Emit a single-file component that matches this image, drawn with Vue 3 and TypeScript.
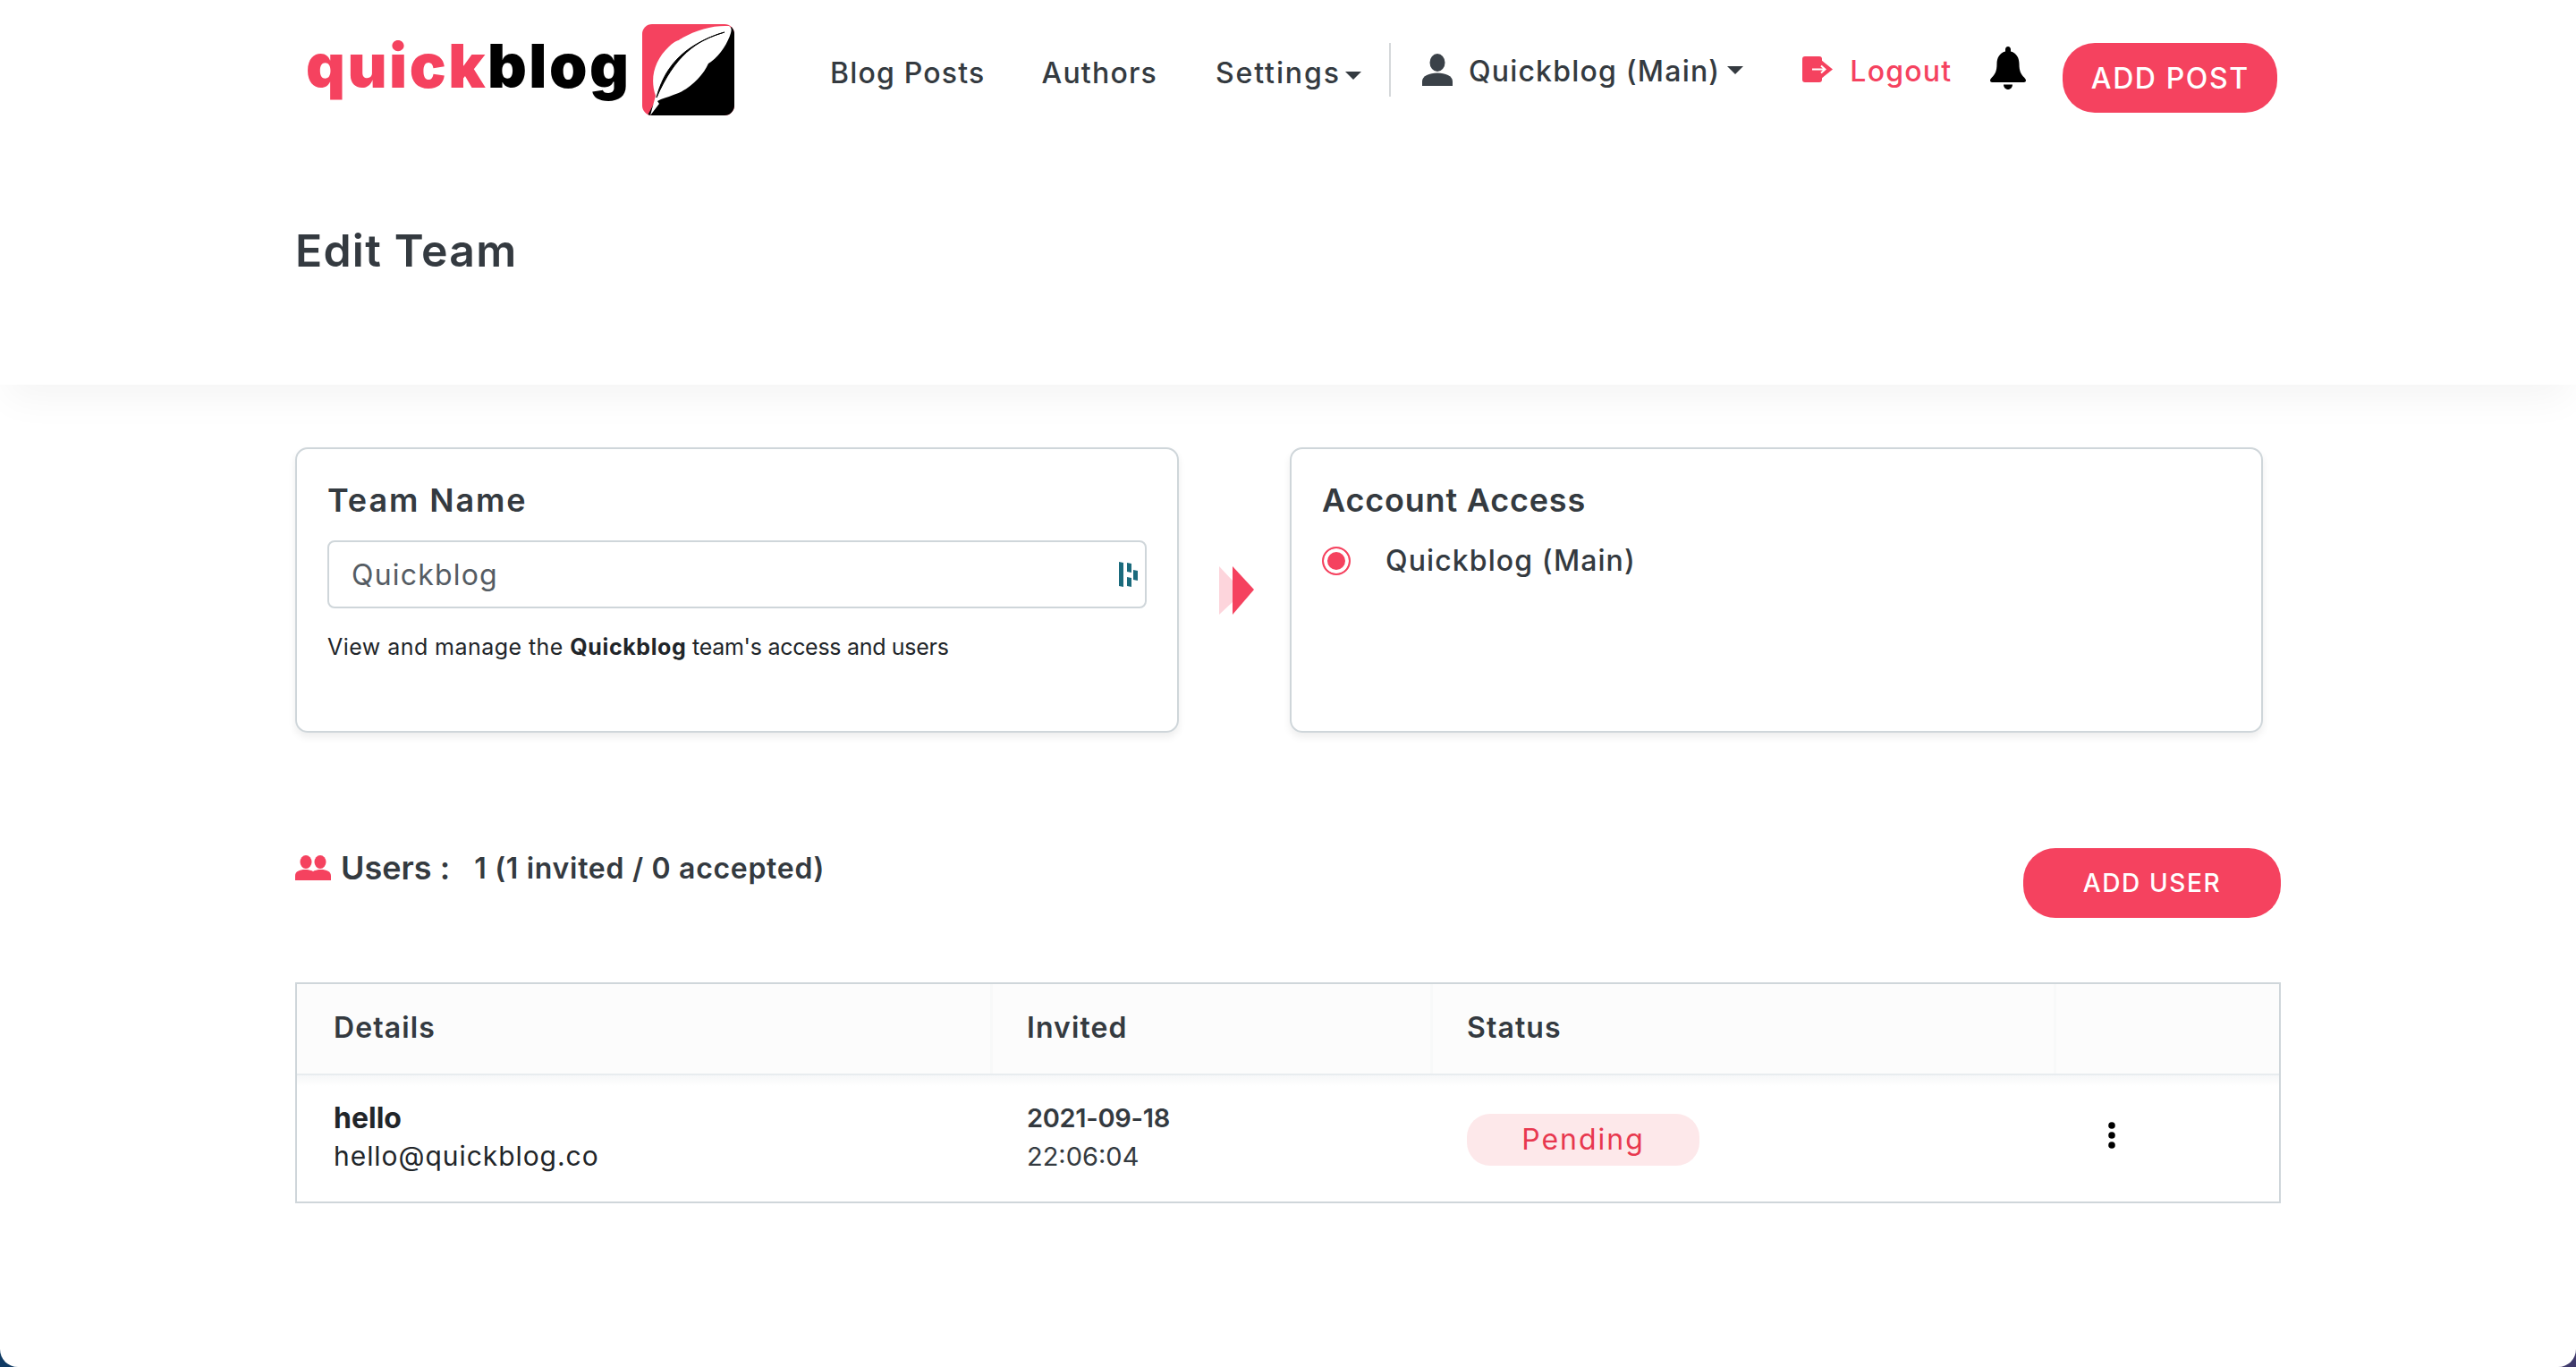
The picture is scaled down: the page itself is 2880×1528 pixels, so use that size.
<template>
  <div class="page">
    <header class="top">
      <nav class="navbar">
        <a class="logo">
          <span class="logo-text"><span class="logo-quick">quick</span>blog</span>
          <svg class="logo-mark" viewBox="0 0 103 102" width="103" height="102">
            <clipPath id="markClip"><rect width="103" height="102" rx="11" /></clipPath>
            <g clip-path="url(#markClip)">
              <rect width="103" height="102" fill="#f5425f" />
              <path d="M103 0V102H6L20 76 60 40 92 10Z" fill="#000" />
              <path d="M9 102 15 80C8 60 14 40 30 25 38 17 41 19 42 17 60 6 80 1 97 2 100 4 100 6 99 10 96 20 88 34 77 42L74 44C68 58 52 74 35 79 28 82 22 83 17 86L19 89Z" fill="#fff" />
              <path d="M16 82C24 52 42 24 92 9 60 18 36 36 16 82Z" fill="#000" stroke="#000" stroke-width="1" />
            </g>
          </svg>
        </a>
        <a class="nav-link blog">Blog Posts</a>
        <a class="nav-link authors">Authors</a>
        <a class="nav-link settings">Settings<i class="caret"></i></a>
        <span class="divider"></span>
        <svg class="user-icon" viewBox="0 0 36 36" width="36" height="36">
          <ellipse cx="18" cy="10" rx="8.500" ry="10" fill="#3a4148" />
          <path d="M1 36V31C1 25 9 21.500 18 21.500S35 25 35 31V36Z" fill="#3a4148" />
        </svg>
        <a class="nav-link account">Quickblog (Main)<i class="caret"></i></a>
        <svg class="logout-icon" viewBox="0 0 34 29" width="34" height="29">
          <rect width="22" height="29" rx="3" fill="#f5425f" />
          <path d="M21 4 34 14.500 21 25Z" fill="#f5425f" />
          <path d="M11 14.500H25M21 10.500 25.500 14.500 21 18.500" stroke="#fff" stroke-width="2" fill="none" />
        </svg>
        <a class="nav-link logout">Logout</a>
        <svg class="bell" viewBox="0 0 40 48" width="40" height="48">
          <path d="M20 0C21.800 0 23 1.400 23 3.200V5.400C29.600 7 32.500 12.800 32.500 19.400 32.500 27.200 34.500 30.900 38 34.600 39.200 35.900 40 37 40 38 40 39.200 39 40 37.800 40H2.200C1 40 0 39.200 0 38 0 37 .8 35.900 2 34.600 5.500 30.900 7.500 27.200 7.500 19.400 7.500 12.800 10.400 7 17 5.400V3.200C17 1.400 18.200 0 20 0Z" />
          <path d="M15 42.500H25C25 45.500 22.800 48 20 48S15 45.500 15 42.500Z" />
        </svg>
        <button class="btn add-post">ADD POST</button>
      </nav>
      <h1 class="title">Edit Team</h1>
    </header>

    <main class="content">
      <section class="cards">
        <div class="card team">
          <h2>Team Name</h2>
          <div class="field">
            <span>{{ teamName }}</span>
            <svg class="field-icon" viewBox="0 0 21 28" width="21" height="28">
              <path d="M0 0 5 1V28L0 27ZM9 1 14 2V12L9 11ZM9 17 14 18V28L9 27ZM16 9 21 10V21L16 20Z" fill="#1b6b7d" />
            </svg>
          </div>
          <p class="help"><span class="help-lead">View and manage the </span><b>{{ teamName }}</b> team's access and users</p>
        </div>
        <svg class="arrow" viewBox="0 0 39 54" width="39" height="54">
          <path d="M0 0 15 16V40L0 54Z" fill="#fdd5dc" />
          <path d="M15 0 39 26 15 54Z" fill="#f5425f" />
        </svg>
        <div class="card access">
          <h2>Account Access</h2>
          <label class="radio-row">
            <span class="radio"></span>
            Quickblog (Main)
          </label>
        </div>
      </section>

      <section class="users-head">
        <div class="users-count">
          <svg viewBox="0 0 40 28" width="40" height="28">
            <ellipse cx="12" cy="7.500" rx="6.500" ry="7.500" fill="#f5425f" />
            <ellipse cx="28" cy="7.500" rx="6.500" ry="7.500" fill="#f5425f" />
            <path d="M0 28V23C0 18 5 16 11 16 17 16 20 18 20 18 20 18 23 16 29 16 35 16 40 18 40 23V28Z" fill="#f5425f" />
          </svg>
          <strong>Users :</strong>
          <span>1 (1 invited / 0 accepted)</span>
        </div>
        <button class="btn add-user">ADD USER</button>
      </section>

      <section class="table">
        <div class="row head">
          <div v-for="col in columns" :key="col" class="cell">{{ col }}</div>
        </div>
        <div v-for="user in users" :key="user.email" class="row body">
          <div class="cell">
            <b>{{ user.name }}</b>
            <span class="email">{{ user.email }}</span>
          </div>
          <div class="cell">
            <em>{{ user.date }}</em>
            <span>{{ user.time }}</span>
          </div>
          <div class="cell"><span class="pill">{{ user.status }}</span></div>
          <div class="cell">
            <svg class="kebab" viewBox="0 0 8 30" width="8" height="30">
              <circle cx="4" cy="4" r="3.800" />
              <circle cx="4" cy="15" r="3.800" />
              <circle cx="4" cy="26" r="3.800" />
            </svg>
          </div>
        </div>
      </section>
    </main>
  </div>
</template>

<script setup lang="ts">
type TeamUser = {
  name: string;
  email: string;
  date: string;
  time: string;
  status: string;
};

const teamName = "Quickblog";
const columns: string[] = ["Details", "Invited", "Status", ""];
const users: TeamUser[] = [
  { name: "hello", email: "hello@quickblog.co", date: "2021-09-18", time: "22:06:04", status: "Pending" },
];
</script>

<style>
body {
  margin: 0;
  background: linear-gradient(90deg, #0f3a63, #3f3a6b);
}
</style>

<style scoped>
.page {
  position: relative;
  height: 1528px;
  overflow: hidden;
  background: #fff;
  border-radius: 0 0 20px 20px;
  font-family: Inter, "Open Sans", sans-serif;
  color: #343a40;
}

.top {
  height: 430px;
  box-shadow: 0 24px 40px -8px rgba(0, 0, 0, 0.045);
}

.navbar {
  display: flex;
  align-items: flex-start;
  padding-left: 342px;
  height: 130px;
  font-size: 32px;
  font-weight: 500;
  letter-spacing: 1.200px;
}

.logo {
  display: flex;
  margin-top: 27px;
  width: 480px;
  letter-spacing: 0;
}

.logo-text {
  margin-top: -5px;
  font-size: 68px;
  font-weight: 900;
  letter-spacing: 2.500px;
  line-height: 102px;
  color: #000;
  width: 376px;
  white-space: nowrap;
}

.logo-quick {
  color: #f5425f;
}

.nav-link {
  display: flex;
  align-items: center;
  line-height: 40px;
  margin-top: 62px;
  white-space: nowrap;
}

.blog {
  margin-left: 106px;
}

.authors {
  margin-left: 63px;
}

.settings {
  margin-left: 65px;
  letter-spacing: 1.900px;
}

.caret {
  display: block;
  margin-left: 5px;
  margin-top: 4px;
  width: 0;
  height: 0;
  border: 9px solid transparent;
  border-top: 9px solid #343a40;
  border-bottom: 0;
}

.divider {
  width: 2px;
  height: 60px;
  margin-top: 48px;
  margin-left: 31px;
  background: #d5d8da;
}

.user-icon {
  margin-top: 60px;
  margin-left: 34px;
}

.account {
  margin-left: 17px;
  margin-top: 60px;
}

.account .caret {
  margin-left: 8px;
  margin-top: -4px;
}

.logout-icon {
  margin-top: 63px;
  margin-left: 66px;
}

.logout {
  margin-left: 19px;
  margin-top: 60px;
  color: #f5425f;
}

.bell {
  margin-top: 52px;
  margin-left: 43px;
}

.btn {
  border: 0;
  background: #f5425f;
  color: #fff;
  font-family: inherit;
  font-weight: 500;
  border-radius: 36px;
  height: 78px;
  padding: 0;
}

.add-post {
  width: 240px;
  margin-top: 48px;
  margin-left: 41px;
  font-size: 32px;
  letter-spacing: 1.600px;
}

.title {
  margin: 118px 0 0 330px;
  font-size: 50px;
  font-weight: 600;
  letter-spacing: 1.200px;
  line-height: 64px;
}

.content {
  padding: 70px 330px 0;
}

.cards {
  display: flex;
  align-items: center;
}

.card {
  box-sizing: border-box;
  height: 319px;
  padding: 34px 34px;
  border: 2px solid #cfd6da;
  border-radius: 14px;
  box-shadow: 0 5px 8px rgba(0, 0, 0, 0.07);
}

.card h2 {
  margin: 0;
  font-size: 36px;
  font-weight: 600;
  line-height: 46px;
}

.team {
  width: 988px;
}

.team h2 {
  letter-spacing: 1.900px;
}

.access {
  width: 1088px;
  margin-left: 40px;
}

.access h2 {
  letter-spacing: 0.800px;
}

.arrow {
  margin-left: 45px;
}

.field {
  display: flex;
  align-items: center;
  justify-content: space-between;
  box-sizing: border-box;
  height: 76px;
  margin-top: 22px;
  padding: 0 8px 0 25px;
  border: 2px solid #cfd6da;
  border-radius: 8px;
  font-size: 32px;
  letter-spacing: 1.200px;
  color: #555c63;
}

.help {
  margin: 26px 0 0;
  font-size: 25px;
  letter-spacing: -0.300px;
  line-height: 34px;
  color: #212529;
}

.help-lead {
  letter-spacing: 0.450px;
}

.help b {
  letter-spacing: 0.600px;
}

.radio-row {
  display: flex;
  align-items: center;
  margin-top: 25px;
  gap: 39px;
  font-size: 32px;
  font-weight: 500;
  letter-spacing: 1.100px;
  line-height: 40px;
}

.radio {
  box-sizing: border-box;
  width: 32px;
  height: 32px;
  border: 2px solid #f5425f;
  border-radius: 50%;
  background: #f5425f;
  box-shadow: inset 0 0 0 4px #fff;
}

.users-head {
  display: flex;
  justify-content: space-between;
  align-items: flex-start;
  margin-top: 129px;
}

.users-count {
  display: flex;
  align-items: center;
  height: 44px;
  font-size: 32px;
  letter-spacing: 0.700px;
  font-weight: 600;
}

.users-count strong {
  font-size: 36px;
  letter-spacing: 0;
  font-weight: 600;
  margin: 0 27px 0 11px;
}

.add-user {
  width: 288px;
  font-size: 28px;
  letter-spacing: 1.600px;
}

.table {
  margin-top: 72px;
  border: 2px solid #cfd6da;
}

.row {
  display: grid;
  grid-template-columns: 775px 492px 697px 1fr;
}

.head {
  height: 100px;
  background: #fcfcfc;
  border-bottom: 2px solid #e8ecef;
  font-size: 32px;
  letter-spacing: 1.100px;
  font-weight: 600;
}

.head .cell {
  padding-left: 41px;
  line-height: 98px;
}

.head .cell + .cell {
  box-shadow: inset 3px 0 0 #f8f9f9;
}

.body {
  height: 141px;
  background: linear-gradient(#f6f7f8, #fff 12px);
}

.body .cell {
  display: flex;
  flex-direction: column;
  align-items: flex-start;
  padding: 26px 0 0 41px;
  font-size: 29px;
  line-height: 43px;
}

.body b {
  font-size: 32px;
  color: #212529;
}

.body em {
  font-style: normal;
  font-weight: 600;
  letter-spacing: -0.300px;
}

.email {
  font-size: 30px;
  letter-spacing: 0.950px;
  color: #212529;
}

.pill {
  box-sizing: border-box;
  width: 260px;
  height: 58px;
  margin-top: 17px;
  text-align: center;
  line-height: 58px;
  font-size: 32px;
  letter-spacing: 2px;
  color: #e8384f;
  background: #fde8ea;
  border-radius: 26px;
}

.kebab {
  margin: 26px 0 0 20px;
}
</style>
